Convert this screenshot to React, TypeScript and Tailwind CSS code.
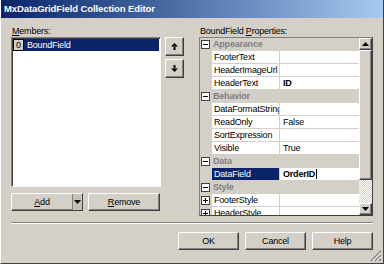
import React from 'react';

const raised =
  'bg-[#d4d0c8] border border-t-white border-l-white border-r-[#404040] border-b-[#404040] shadow-[inset_-1px_-1px_0_#808080]';

type Row = {
  cat?: string;
  name?: string;
  value?: string;
  bold?: boolean;
  selected?: boolean;
  plus?: boolean;
};

const rows: Row[] = [
  { cat: 'Appearance' },
  { name: 'FooterText' },
  { name: 'HeaderImageUrl' },
  { name: 'HeaderText', value: 'ID', bold: true },
  { cat: 'Behavior' },
  { name: 'DataFormatString' },
  { name: 'ReadOnly', value: 'False' },
  { name: 'SortExpression' },
  { name: 'Visible', value: 'True' },
  { cat: 'Data' },
  { name: 'DataField', value: 'OrderID', bold: true, selected: true },
  { cat: 'Style' },
  { name: 'FooterStyle', plus: true },
  { name: 'HeaderStyle', plus: true },
];

function Arrow({ down }: { down?: boolean }) {
  return (
    <svg width="7" height="7" viewBox="0 0 7 7" className={down ? 'rotate-180' : ''}>
      <polygon points="3.5,0 7,3.5 0,3.5" fill="#000" />
      <rect x="2.5" y="3.5" width="2" height="3.5" fill="#000" />
    </svg>
  );
}

function Tri({ down }: { down?: boolean }) {
  return (
    <svg width="7" height="4" viewBox="0 0 7 4">
      <polygon points={down ? '0,0 7,0 3.5,4' : '3.5,0 7,4 0,4'} fill="#000" />
    </svg>
  );
}

function ExpandBox({ plus }: { plus?: boolean }) {
  return (
    <div className="relative w-[9px] h-[9px] border border-[#404040] bg-white ml-[1px]">
      <div className="absolute left-[1px] top-[3px] w-[5px] h-px bg-black" />
      {plus && <div className="absolute left-[3px] top-[1px] w-px h-[5px] bg-black" />}
    </div>
  );
}

function PropertyGrid() {
  return (
    <div className="w-[174px] h-[179px] flex border border-[#808080] border-r-[#404040] border-b-[#404040]">
      <div className="w-[159px] h-full overflow-hidden bg-[#d4d0c8]">
        {rows.map((r, i) =>
          r.cat ? (
            <div key={i} className="h-[13px] flex items-center">
              <div className="w-[12px] flex items-center">
                <ExpandBox />
              </div>
              <span className="pl-[1px] font-bold text-[#808080]">{r.cat}</span>
            </div>
          ) : (
            <div key={i} className="h-[13px] flex items-start">
              <div className="w-[12px] h-[12px] flex items-center">{r.plus && <ExpandBox plus />}</div>
              <div
                className={
                  'w-[67px] h-[12px] pl-[2px] flex items-center overflow-hidden whitespace-nowrap ' +
                  (r.selected ? 'bg-[#0a246a] text-white' : 'bg-white')
                }
              >
                {r.name}
              </div>
              <div className="w-px" />
              <div
                className={
                  'w-[79px] h-[12px] pl-[3px] flex items-center bg-white whitespace-nowrap ' +
                  (r.bold ? 'font-bold' : '')
                }
              >
                {r.value}
                {r.selected && <span className="inline-block w-px h-[10px] bg-black ml-[1px]" />}
              </div>
            </div>
          )
        )}
      </div>
      <div className="w-[13px] flex flex-col">
        <div className={raised + ' h-[12px] flex items-center justify-center'}>
          <Tri />
        </div>
        <div className={raised + ' h-[130px]'} />
        <div className="flex-1 bg-[repeating-conic-gradient(#ffffff_0_25%,#d4d0c8_0_50%)] bg-[length:2px_2px]" />
        <div className={raised + ' h-[12px] flex items-center justify-center'}>
          <Tri down />
        </div>
      </div>
    </div>
  );
}

export default function App() {
  return (
    <div className="relative w-[384px] h-[264px] overflow-hidden flex flex-col bg-[#d4d0c8] border-l border-l-white border-r border-r-[#404040] border-b border-b-[#404040] font-['Liberation_Sans',Arial,sans-serif] text-[9px] tracking-[-0.2px] leading-none text-black">
      <div className="h-[18px] shrink-0 flex items-center pl-[3px] bg-gradient-to-r from-[#0a246a] to-[#a6caf0] text-white font-bold text-[9.5px] tracking-[-0.1px]">
        MxDataGridField Collection Editor
      </div>

      <div className="flex items-start pt-[7px] pl-[10px]">
        <div className="w-[150px] flex flex-col">
          <div className="h-[12px] leading-[12px] pl-[1px]">
            <span className="underline">M</span>embers:
          </div>
          <div className="h-[150px] bg-white border border-t-[#808080] border-l-[#808080] border-r-white border-b-white shadow-[inset_1px_1px_0_#404040]">
            <div className="mt-[1px] ml-[1px] mr-px h-[12px] flex items-center bg-[#0a246a] text-white">
              <div className="w-[11px] h-[12px] flex items-center justify-center bg-[#d4d0c8] text-black border border-black">
                0
              </div>
              <span className="pl-[3px]">BoundField</span>
            </div>
          </div>
          <div className="flex gap-[5px] mt-[6px]">
            <div className={raised + ' w-[72px] h-[18px] flex'}>
              <div className="flex-1 flex items-center justify-center">
                <span className="underline">A</span>dd
              </div>
              <div className="w-[10px] flex items-center justify-center bg-[#c4c1ba] border-l border-l-[#808080]">
                <Tri down />
              </div>
            </div>
            <div className={raised + ' w-[72px] h-[18px] flex items-center justify-center'}>
              <span className="underline">R</span>emove
            </div>
          </div>
        </div>

        <div className="ml-[4px] pt-[12px] flex flex-col gap-[3px]">
          <div className={raised + ' w-[19px] h-[19px] flex items-center justify-center'}>
            <Arrow />
          </div>
          <div className={raised + ' w-[19px] h-[19px] flex items-center justify-center'}>
            <Arrow down />
          </div>
        </div>

        <div className="ml-[15px] flex flex-col">
          <div className="h-[12px] leading-[12px] pl-[1px]">
            BoundField <span className="underline">P</span>roperties:
          </div>
          <PropertyGrid />
        </div>
      </div>

      <div className="mt-[6px] mx-[10px] h-[2px] border-t border-t-[#808080] border-b border-b-white" />

      <div className="mt-[8px] pr-[10px] flex justify-end gap-[6px]">
        <div className={raised + ' w-[61px] h-[18px] flex items-center justify-center'}>OK</div>
        <div className={raised + ' w-[61px] h-[18px] flex items-center justify-center'}>Cancel</div>
        <div className={raised + ' w-[61px] h-[18px] flex items-center justify-center'}>Help</div>
      </div>

      <svg className="absolute right-px bottom-px" width="12" height="12" viewBox="0 0 12 12">
        <path d="M11 1 L1 11 M11 5 L5 11 M11 9 L9 11" stroke="#808080" strokeWidth="1.2" />
        <path d="M11 2.5 L2.5 11 M11 6.5 L6.5 11" stroke="#ffffff" strokeWidth="0.8" />
      </svg>
    </div>
  );
}
